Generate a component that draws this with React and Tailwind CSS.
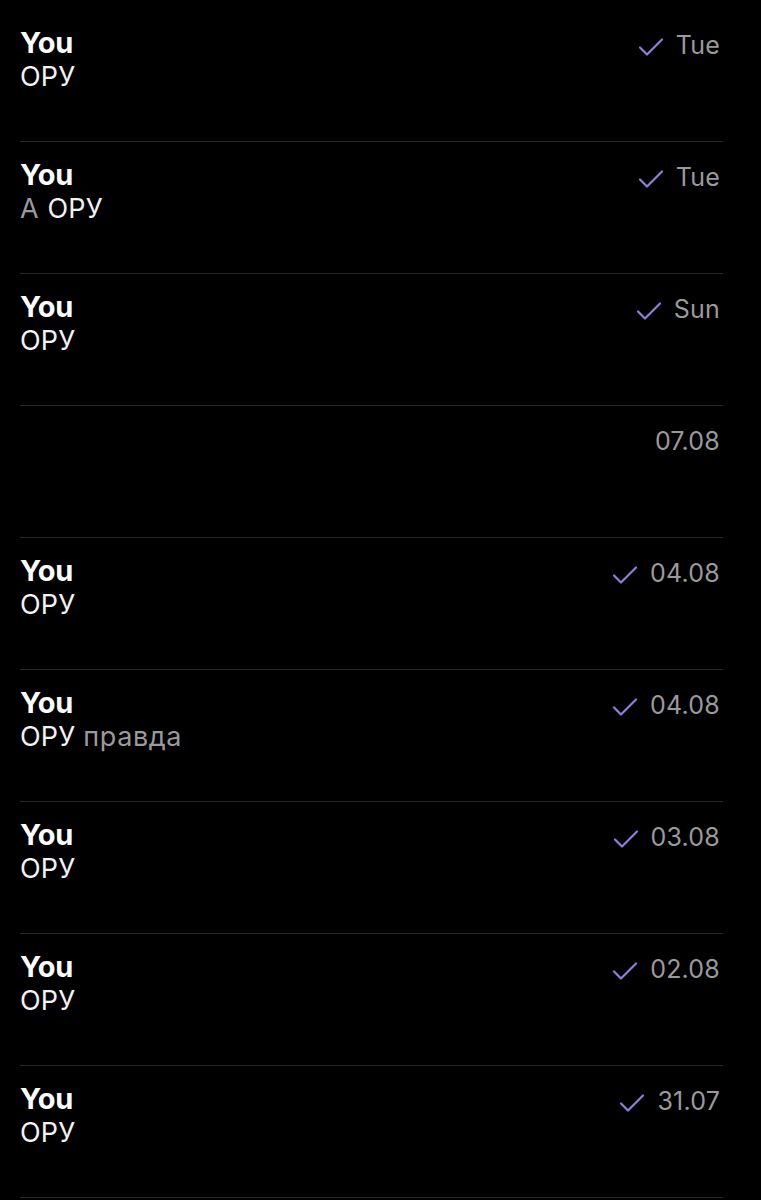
const rows = [
  { time: "Tue", text: [["ОРУ", "w"]] },
  { time: "Tue", text: [["А ", "g"], ["ОРУ", "w"]] },
  { time: "Sun", text: [["ОРУ", "w"]] },
  { time: "07.08", empty: true },
  { time: "04.08", text: [["ОРУ", "w"]] },
  { time: "04.08", text: [["ОРУ ", "w"], ["правда", "g"]] },
  { time: "03.08", text: [["ОРУ", "w"]] },
  { time: "02.08", text: [["ОРУ", "w"]] },
  { time: "31.07", text: [["ОРУ", "w"]] },
];

function Check() {
  return (
    <svg width="26" height="20" viewBox="0 0 26 20" fill="none" className="mt-[2px]">
      <path d="M2 10.5 L9 17.5 L24 2.5" stroke="#8e80d8" strokeWidth="2.2" strokeLinecap="round" strokeLinejoin="round" />
    </svg>
  );
}

function Row({ row }) {
  return (
    <div className="ml-[20px] mr-[38px] flex h-[132px] justify-between border-b border-[#27272a] pt-[17px]">
      <div>
        {!row.empty && (
          <>
            <p className="text-[29px] font-bold leading-[32px] tracking-[-0.3px] text-white">You</p>
            <p className="mt-[2px] text-[27px] leading-[32px] tracking-[0.2px] text-[#f2f2f2]">
              {row.text.map(([t, c], i) => (
                <span key={i} className={c === "g" ? "tracking-[0.6px] text-[#9a9a9e]" : ""}>
                  {t}
                </span>
              ))}
            </p>
          </>
        )}
      </div>
      <div className="flex h-[32px] items-center gap-[12px] pt-[5px] pr-[3px]">
        {!row.empty && <Check />}
        <span className="text-[25px] tracking-[0.2px] text-[#9a9a9e]">{row.time}</span>
      </div>
    </div>
  );
}

export default function App() {
  return (
    <main className="min-h-[1200px] bg-black pt-[10px] font-['Inter',sans-serif]">
      {rows.map((row, i) => (
        <Row key={i} row={row} />
      ))}
    </main>
  );
}
